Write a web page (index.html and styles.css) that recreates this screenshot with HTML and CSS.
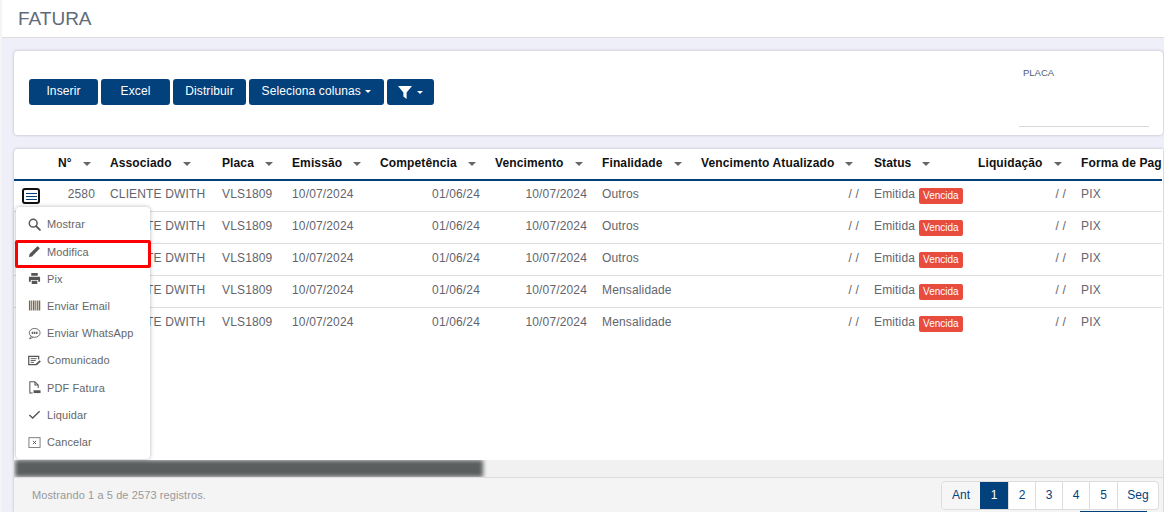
FILE: index.html
```html
<!DOCTYPE html>
<html lang="pt-BR">
<head>
  <meta charset="UTF-8" />
  <meta name="viewport" content="width=device-width, initial-scale=1.0" />
  <title>Fatura</title>
  <link rel="stylesheet" href="styles.css">
</head>
<body>

  <header class="page-header">
    <h1>FATURA</h1>
  </header>

  <main class="content">
    <section class="toolbar">
      <div class="toolbar-buttons">
        <button class="btn btn-wide">Inserir</button>
        <button class="btn btn-wide">Excel</button>
        <button class="btn btn-dist">Distribuir</button>
        <button class="btn btn-cols">Seleciona colunas <span class="btn-caret"></span></button>
        <button class="btn btn-filter">
          <svg width="14" height="13" viewBox="0 0 14 13"><path d="M0 0h14L8.600 6.400V13L5.400 10.600V6.400z" fill="#fff"/></svg>
          <span class="btn-caret"></span>
        </button>
      </div>
      <div class="filter-field">
        <label>PLACA</label>
        <div class="filter-input"></div>
      </div>
    </section>

    <section class="grid-card">
      <div class="grid-wrap">
        <table class="grid">
          <colgroup>
            <col class="c-act"><col class="c-num"><col class="c-assoc"><col class="c-placa">
            <col class="c-emis"><col class="c-comp"><col class="c-venc"><col class="c-fin">
            <col class="c-atual"><col class="c-status"><col class="c-liq"><col class="c-forma">
          </colgroup>
          <thead>
            <tr>
              <th></th>
              <th>N°<i></i></th>
              <th>Associado<i></i></th>
              <th>Placa<i></i></th>
              <th>Emissão<i></i></th>
              <th>Competência<i></i></th>
              <th>Vencimento<i></i></th>
              <th>Finalidade<i></i></th>
              <th>Vencimento Atualizado<i></i></th>
              <th>Status<i></i></th>
              <th>Liquidação<i></i></th>
              <th>Forma de Pagamento<i></i></th>
            </tr>
          </thead>
          <tbody>
            <tr>
              <td><button class="row-toggle"><span></span><span></span><span></span></button></td>
              <td class="right">2580</td><td>CLIENTE DWITH</td><td>VLS1809</td><td>10/07/2024</td>
              <td class="right">01/06/24</td><td class="right">10/07/2024</td><td>Outros</td>
              <td class="right">/ /</td><td><div class="status">Emitida <span class="badge">Vencida</span></div></td>
              <td class="right">/ /</td><td>PIX</td>
            </tr>
            <tr>
              <td></td>
              <td class="right"></td><td>CLIENTE DWITH</td><td>VLS1809</td><td>10/07/2024</td>
              <td class="right">01/06/24</td><td class="right">10/07/2024</td><td>Outros</td>
              <td class="right">/ /</td><td><div class="status">Emitida <span class="badge">Vencida</span></div></td>
              <td class="right">/ /</td><td>PIX</td>
            </tr>
            <tr>
              <td></td>
              <td class="right"></td><td>CLIENTE DWITH</td><td>VLS1809</td><td>10/07/2024</td>
              <td class="right">01/06/24</td><td class="right">10/07/2024</td><td>Outros</td>
              <td class="right">/ /</td><td><div class="status">Emitida <span class="badge">Vencida</span></div></td>
              <td class="right">/ /</td><td>PIX</td>
            </tr>
            <tr>
              <td></td>
              <td class="right"></td><td>CLIENTE DWITH</td><td>VLS1809</td><td>10/07/2024</td>
              <td class="right">01/06/24</td><td class="right">10/07/2024</td><td>Mensalidade</td>
              <td class="right">/ /</td><td><div class="status">Emitida <span class="badge">Vencida</span></div></td>
              <td class="right">/ /</td><td>PIX</td>
            </tr>
            <tr>
              <td></td>
              <td class="right"></td><td>CLIENTE DWITH</td><td>VLS1809</td><td>10/07/2024</td>
              <td class="right">01/06/24</td><td class="right">10/07/2024</td><td>Mensalidade</td>
              <td class="right">/ /</td><td><div class="status">Emitida <span class="badge">Vencida</span></div></td>
              <td class="right">/ /</td><td>PIX</td>
            </tr>
          </tbody>
        </table>
      </div>

      <div class="scroll-track"><div class="scroll-thumb"></div></div>

      <div class="grid-footer">
        <span class="grid-info">Mostrando 1 a 5 de 2573 registros.</span>
        <nav class="pager">
          <a class="pager-prev">Ant</a>
          <a class="active">1</a>
          <a>2</a>
          <a>3</a>
          <a>4</a>
          <a class="pager-five">5</a>
          <a class="pager-next">Seg</a>
        </nav>
        <div class="pager-peek"></div>
      </div>
    </section>

    <ul class="row-menu">
      <li>
        <svg viewBox="0 0 14 14"><circle cx="5.600" cy="5.600" r="4.200" fill="none" stroke="#555" stroke-width="1.600"/><path d="M8.800 8.800l4 4" stroke="#555" stroke-width="2" stroke-linecap="round"/></svg>
        Mostrar
      </li>
      <li class="marked">
        <svg viewBox="0 0 14 14"><path d="M1 13l.7-3.300L9.600 1.800a1 1 0 0 1 1.400 0l1.200 1.200a1 1 0 0 1 0 1.400L4.300 12.300z" fill="#555"/></svg>
        Modifica
      </li>
      <li>
        <svg viewBox="0 0 14 14"><path d="M3.500 1h7v3h-7zM1 5h12v5.500h-2V8.500H3v2H1zM4 9.500h6V13H4z" fill="#555"/></svg>
        Pix
      </li>
      <li>
        <svg viewBox="0 0 14 14"><path d="M1 1.500h1.600v11H1zM3.400 1.500h1.200v11H3.400zM5.400 1.500h1.600v11H5.400zM7.800 1.500h1.200v11H7.800zM9.800 1.500h1.200v11H9.800zM11.600 1.500h1.600v11h-1.600z" fill="#77684e"/></svg>
        Enviar Email
      </li>
      <li>
        <svg viewBox="0 0 14 14"><ellipse cx="7.200" cy="6.300" rx="5.800" ry="4.800" fill="none" stroke="#666"/><path d="M3.200 10l-1.500 2.800 3.600-1.500" fill="none" stroke="#666"/><path d="M4 6.300h6.400" stroke="#666" stroke-width="2.600" stroke-dasharray="1.700 .6"/></svg>
        Enviar WhatsApp
      </li>
      <li>
        <svg viewBox="0 0 14 14"><path d="M11.500 6V2.500H.8v9h8.400" fill="none" stroke="#555" stroke-width="1.300"/><path d="M2.800 5h6.500M2.800 7h5.500M2.800 9h3.500" stroke="#555"/><path d="M8.500 10.500l4-3.800 1.300 1.300-4 3.800H8.500z" fill="#555"/></svg>
        Comunicado
      </li>
      <li>
        <svg viewBox="0 0 14 14"><path d="M7.500.8H2v12h3M7.500.8l3.500 3.400v3.300M7.500.8v3.400H11" fill="none" stroke="#555" stroke-width="1.100"/><path d="M6 10h7.500v3H6z" fill="#555"/></svg>
        PDF Fatura
      </li>
      <li>
        <svg viewBox="0 0 14 14"><path d="M1.500 7.500l3.500 3.200L12.500 3.500" fill="none" stroke="#555" stroke-width="1.500"/></svg>
        Liquidar
      </li>
      <li>
        <svg viewBox="0 0 14 14"><rect x="1" y="1.800" width="12" height="10.500" fill="none" stroke="#777"/><path d="M5.300 5.300l3.400 3.400M8.700 5.300l-3.400 3.400" stroke="#555"/></svg>
        Cancelar
      </li>
    </ul>
  </main>

</body>
</html>
```

FILE: styles.css
```css
* {
  box-sizing: border-box;
}

html, body {
  height: 100%;
}

body {
  margin: 0;
  padding-left: 2px;
  overflow: hidden;
  font-family: "Liberation Sans", Arial, sans-serif;
  font-size: 12px;
  color: #62656e;
  background-color: #f4f4f4;
}

.page-header {
  height: 38px;
  padding-left: 16px;
  background: #fff;
  border-bottom: 1px solid #dcdcdc;
  display: flex;
  align-items: center;
}

.page-header h1 {
  margin: 0;
  font-size: 19px;
  font-weight: normal;
  color: #5f6b78;
}

.content {
  position: relative;
  height: 474px;
  padding: 13px 1px 0 12px;
  background-color: #eeeff8;
}

/* top panel */
.toolbar {
  height: 84px;
  padding: 0 14px 0 15px;
  background: #fff;
  border-radius: 4px;
  box-shadow: 0 0 3px rgba(0, 0, 0, 0.25);
  display: flex;
  justify-content: space-between;
}

.toolbar-buttons {
  display: flex;
  gap: 3px;
  padding-top: 28px;
}

.btn {
  height: 26px;
  padding: 0 0 2px;
  font-family: inherit;
  font-size: 12px;
  letter-spacing: 0.12px;
  color: #fff;
  background-color: #03417c;
  border: none;
  border-radius: 3px;
}

.btn-wide {
  width: 69px;
}

.btn-dist {
  width: 73px;
}

.btn-cols {
  width: 135px;
}

.btn-filter {
  width: 47px;
  padding: 0;
  display: flex;
  align-items: center;
  justify-content: center;
  gap: 4px;
}

.btn-caret {
  display: inline-block;
  margin-left: 1px;
  vertical-align: 2px;
  border-top: 3px solid #fff;
  border-left: 3px solid transparent;
  border-right: 3px solid transparent;
}

.filter-field {
  width: 130px;
  padding-top: 16px;
  display: flex;
  flex-direction: column;
}

.filter-field label {
  padding-left: 4px;
  font-size: 9.5px;
  color: #4f5a70;
}

.filter-input {
  margin-top: 48px;
  border-bottom: 1px solid #d8d8d8;
}

/* table card */
.grid-card {
  margin-top: 14px;
  height: 363px;
  background: #fff;
  border-radius: 4px 0 0 0;
  box-shadow: 0 0 3px rgba(0, 0, 0, 0.25);
  display: flex;
  flex-direction: column;
}

.grid-wrap {
  height: 311px;
  margin-right: 1px;
  flex: none;
  overflow: hidden;
}

.grid {
  width: 1259px;
  table-layout: fixed;
  border-collapse: separate;
  border-spacing: 0;
}

.c-act { width: 36px; }
.c-num { width: 52px; }
.c-assoc { width: 112px; }
.c-placa { width: 70px; }
.c-emis { width: 88px; }
.c-comp { width: 115px; }
.c-venc { width: 107px; }
.c-fin { width: 99px; }
.c-atual { width: 173px; }
.c-status { width: 104px; }
.c-liq { width: 103px; }
.c-forma { width: 200px; }

.grid th {
  height: 32px;
  padding: 0 0 3px 8px;
  font-size: 12px;
  text-align: left;
  white-space: nowrap;
  letter-spacing: 0.12px;
  color: #111;
  border-bottom: 2px solid #03417c;
}

.grid th i {
  display: inline-block;
  margin-left: 11px;
  vertical-align: 1px;
  border-top: 4px solid #666;
  border-left: 4px solid transparent;
  border-right: 4px solid transparent;
}

.grid td {
  height: 32px;
  padding: 0 8px 4px;
  white-space: nowrap;
  letter-spacing: 0.15px;
  border-bottom: 1px solid #ddd;
}

.grid tbody tr:first-child td {
  height: 31px;
  padding-bottom: 5px;
}

.grid tbody tr:last-child td {
  border-bottom: none;
}

.grid td.right {
  padding-right: 7px;
  text-align: right;
}

.row-toggle {
  width: 18px;
  height: 16px;
  margin-top: 5px;
  padding: 0;
  background: #fff;
  border: 2px solid #111;
  border-radius: 3px;
  display: flex;
  flex-direction: column;
  align-items: center;
  justify-content: center;
  gap: 2px;
}

.row-toggle span {
  width: 11px;
  height: 1px;
  background: #03417c;
}

.status {
  display: flex;
  align-items: center;
  gap: 4px;
}

.badge {
  margin-top: 4px;
  padding: 2px 4px;
  width: 44px;
  font-size: 10px;
  line-height: 12px;
  letter-spacing: 0;
  text-align: center;
  color: #fff;
  background-color: #e74c3c;
  border-radius: 2px;
}

.scroll-track {
  height: 17px;
  flex: none;
  background: #f1f1f1;
  overflow: hidden;
}

.scroll-thumb {
  width: 468px;
  height: 17px;
  margin-left: 1px;
  background: #5a5e5f;
  filter: blur(2px);
}

.grid-footer {
  position: relative;
  flex: 1;
  padding: 0 4px 0 18px;
  background: #f4f4f4;
  border-top: 1px solid #ddd;
  display: flex;
  align-items: center;
  justify-content: space-between;
}

.grid-info {
  font-size: 11px;
  letter-spacing: 0.1px;
  color: #999;
}

.pager {
  height: 29px;
  background: #fff;
  border: 1px solid #ddd;
  border-radius: 4px;
  display: flex;
  font-size: 12px;
  color: #03417c;
}

.pager a {
  width: 27px;
  display: flex;
  align-items: center;
  justify-content: center;
  border-left: 1px solid #ddd;
}

.pager a.pager-prev {
  width: 38px;
  background: #f6f6f6;
  border-left: none;
  border-radius: 4px 0 0 4px;
}

.pager a.pager-five {
  width: 28px;
}

.pager a.pager-next {
  width: 41px;
}

.pager a.active {
  width: 28px;
  color: #fff;
  background-color: #03417c;
  border-left: none;
}

.pager-peek {
  position: absolute;
  right: 16px;
  bottom: 0;
  width: 67px;
  height: 1px;
  background: #03417c;
}

/* row actions menu */
.row-menu {
  position: absolute;
  top: 169px;
  left: 14px;
  width: 134px;
  height: 252px;
  margin: 0;
  padding: 3.500px 0 0;
  list-style: none;
  background: #fff;
  border-radius: 4px;
  box-shadow: 0 0 4px rgba(0, 0, 0, 0.3);
}

.row-menu li {
  position: relative;
  height: 27.250px;
  padding-left: 12px;
  font-size: 11px;
  letter-spacing: 0.1px;
  color: #666;
  display: flex;
  align-items: center;
  gap: 6px;
}

.row-menu li svg {
  width: 13px;
  height: 13px;
  flex: none;
}

.row-menu li.marked {
  padding-top: 1px;
}

.row-menu li.marked::after {
  content: "";
  position: absolute;
  top: 2px;
  bottom: -3px;
  left: -1px;
  right: -1px;
  border: 3px solid #f00;
  border-radius: 2px;
}
```
